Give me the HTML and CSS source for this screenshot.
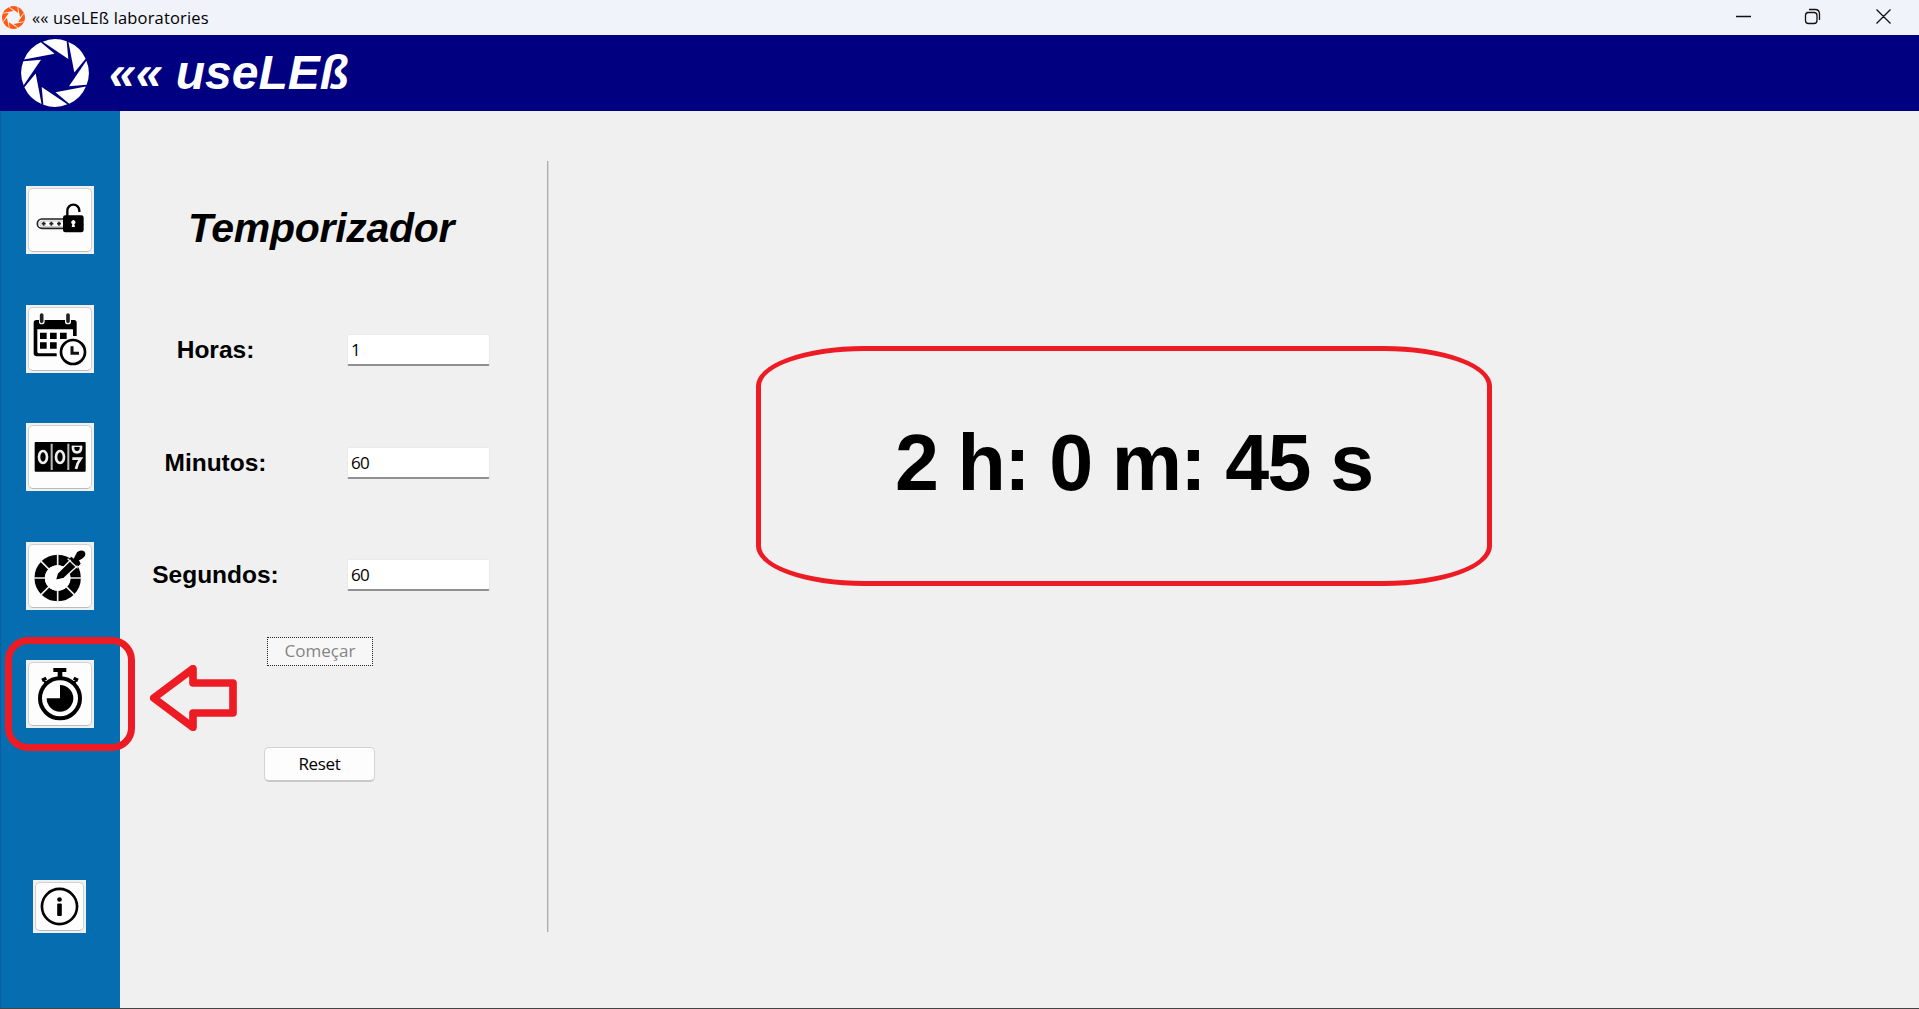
FILE: index.html
```html
<!DOCTYPE html>
<html lang="pt">
<head>
<meta charset="utf-8">
<title>«« useLEß laboratories</title>
<link rel="stylesheet" href="styles.css">
</head>
<body>
<svg class="defs" aria-hidden="true">
  <defs>
    <path id="blade" d="M-37-94Q-2-109 35-95L40-42Z"/>
    <g id="aperture">
      <use href="#blade"/><use href="#blade" transform="rotate(45)"/><use href="#blade" transform="rotate(90)"/><use href="#blade" transform="rotate(135)"/>
      <use href="#blade" transform="rotate(180)"/><use href="#blade" transform="rotate(225)"/><use href="#blade" transform="rotate(270)"/><use href="#blade" transform="rotate(315)"/>
    </g>
  </defs>
</svg>
<div class="window">
  <div class="titlebar">
    <svg class="app-icon" viewBox="-102 -102 204 204"><use href="#aperture"/></svg>
    <span class="app-title">«« useLEß laboratories</span>
    <svg class="controls" viewBox="0 0 219 35">
      <path d="M36 16.5H51M106.500 12.500h7.500q3 0 3 3v5q0 3-3 3h-5.500q-3 0-3-3v-5q0-3 3-3M109 9.500h6q4.500 0 4.500 4.500v6M176.500 9.500l14 14M190.500 9.500l-14 14"/>
    </svg>
  </div>
  <header class="header">
    <svg class="logo" viewBox="-102 -102 204 204"><use href="#aperture"/></svg>
    <h1 class="brand">«« useLEß</h1>
  </header>
  <div class="body">
    <nav class="sidebar">
      <button class="tool"><svg viewBox="76 48 204 204">
        <path d="M190 147H124a14 14 0 0 0 0 28H190" fill="none" stroke="#222" stroke-width="5"/>
        <path d="M190 153H126a8 8 0 0 0 0 17H190" fill="none" stroke="#aaa" stroke-width="2"/>
        <path d="M123 161h12M129 155v12M146 161h12M152 155v12M169 161h12M175 155v12" stroke="#222" stroke-width="5"/>
        <path d="M200 138v-16a18 18 0 0 1 36 0v4" fill="none" stroke="#000" stroke-width="7"/>
        <rect x="187" y="136" width="62" height="51" rx="7"/>
        <path d="M213 171l2-9a6 6 0 1 1 6 0l2 9z" fill="#fff"/>
      </svg></button>
      <button class="tool"><svg viewBox="76 404 204 204">
        <path d="M99 477V457q0-8 8-8h8v5q0 8 8 8t9-8v-5h61v5q0 8 9 8t9-8v-5h9q8 0 8 8v40h-11v-20H110v67q0 5 5 5h53v9H109q-10 0-10-10z"/>
        <path d="M123 434v19M202 434v19" stroke="#222" stroke-width="11" stroke-linecap="round"/>
        <path d="M118 487h20v19h-20zM148 487h20v19h-20zM178 487h20v19h-20zM118 516h20v19h-20zM148 516h20v19h-20z"/>
        <circle cx="217" cy="545" r="36" fill="#fdfdfd" stroke="#000" stroke-width="8"/>
        <path d="M214 528v21h21" fill="none" stroke="#111" stroke-width="9"/>
      </svg></button>
      <button class="tool"><svg viewBox="76 70 204 204">
        <rect x="102" y="127" width="153" height="89" rx="3"/>
        <path d="M153 132v79M203 132v79" stroke="#bbb" stroke-width="6"/>
        <g fill="none" stroke="#eee" stroke-width="8"><ellipse cx="127" cy="172" rx="12" ry="18"/><ellipse cx="178" cy="172" rx="12" ry="18"/>
        <path d="M217 138v7q0 13 12 13t12-13v-7M215 177h25q-11 14-14 31"/></g>
        <path d="M215 140h28" stroke="#eee" stroke-width="4"/>
      </svg></button>
      <button class="tool"><svg viewBox="76 426 204 204">
        <circle cx="171" cy="534" r="54" fill="none" stroke="#000" stroke-width="31"/>
        <path d="M171 460v148M98 534h147M119 482l104 104M119 586l104-104" stroke="#eee" stroke-width="5"/>
        <circle cx="171" cy="534" r="38" fill="#fdfdfd"/>
        <path d="M164 541l6-21 43-43 20 18-43 40z" stroke="#fdfdfd" stroke-width="4"/>
        <path d="M206 476l6-6 7 6 10-19q8-8 18-5 10 4 6 15-3 6-18 14l5 10-7 8z"/>
        <path d="M201 476l30 29" stroke="#eee" stroke-width="4"/>
      </svg></button>
      <button class="tool"><svg viewBox="76 117 204 204">
        <circle cx="178" cy="232" r="60" fill="none" stroke="#000" stroke-width="12"/>
        <path d="M158 141h39v12h-12v16h-14v-16h-13zM178 192a40 40 0 1 1-40 40h40z"/>
        <path d="M124 178l13-6M128 174l12 14M232 178l-13-6M228 174l-12 14" stroke="#000" stroke-width="10"/>
      </svg></button>
      <button class="tool info"><svg viewBox="98 58 160 160">
        <circle cx="178" cy="138" r="53" fill="none" stroke="#000" stroke-width="8"/>
        <circle cx="178" cy="117" r="7"/><rect x="171" y="129" width="14" height="38" rx="3"/>
      </svg></button>
    </nav>
    <main class="content">
      <section class="form">
        <h2 class="heading">Temporizador</h2>
        <div class="row"><label for="h">Horas:</label><input id="h" value="1"></div>
        <div class="row"><label for="m">Minutos:</label><input id="m" value="60"></div>
        <div class="row"><label for="s">Segundos:</label><input id="s" value="60"></div>
        <div class="start">Começar</div>
        <div class="reset">Reset</div>
      </section>
      <div class="divider"></div>
      <section class="display"><div class="clock"><span class="time">2 h: 0 m: 45 s</span></div></section>
    </main>
  </div>
  <div class="highlight"></div>
  <svg class="arrow" viewBox="450 135 261 198"><path d="M461 234L579 146V189H699V279H579V322Z"/></svg>
</div>
</body>
</html>
```
FILE: styles.css
```css
* { box-sizing: border-box; }
body { margin: 0; font-family: "Liberation Sans", Arial, sans-serif; color: #000; }
.defs { position: absolute; width: 0; height: 0; }
.window { position: relative; width: 1919px; height: 1009px; display: flex; flex-direction: column; background: #f0f0f0; border-bottom: 1px solid #444; overflow: hidden; }

.titlebar { height: 35px; flex: none; display: flex; align-items: center; background: #f0f3fa; padding-left: 2px; }
.app-icon { width: 23px; height: 23px; fill: #ff5a14; margin: 0 7px 1px 0; }
.app-title { font: 16.500px/22px "Open Sans", sans-serif; letter-spacing: .150px; white-space: nowrap; }
.controls { width: 219px; height: 35px; margin-left: auto; fill: none; stroke: #111; stroke-width: 1.300; }

.header { height: 76px; flex: none; display: flex; align-items: center; background: #000080; color: #fff; padding-left: 21px; }
.logo { width: 68px; height: 68px; fill: #fff; }
.brand { margin: 0 0 0 20px; font-size: 48px; font-style: italic; line-height: 60px; white-space: nowrap; }

.body { flex: 1; display: flex; min-height: 0; }
.sidebar { width: 120px; flex: none; background: #076db1; border-left: 1px solid #075f9b; display: flex; flex-direction: column; padding: 75px 0 0 24.500px; gap: 50.500px; }
.tool { position: relative; width: 68px; height: 68px; flex: none; padding: 0; border: 0; background: #f0f0f0; }
.tool::before { content: ""; position: absolute; inset: 2px; border: 1px solid #d0d0d0; border-bottom-color: #bbb; border-radius: 5px; background: #fdfdfd; }
.tool svg { position: relative; display: block; width: 100%; height: 100%; }
.info { width: 53px; height: 53px; margin: 101px 0 0 7.500px; }

.content { flex: 1; display: flex; }
.form { width: 427px; display: flex; flex-direction: column; }
.heading { margin: 89px 0 0 68px; font-size: 41px; font-style: italic; letter-spacing: -.280px; line-height: 56px; white-space: nowrap; }
.row { display: grid; grid-template-columns: 190px 143px; column-gap: 37px; align-items: center; height: 32px; margin-top: 80.700px; }
.heading + .row { margin-top: 78px; }
.row label { text-align: center; padding-left: 1px; font-size: 24.500px; font-weight: bold; }
.row input { width: 143px; height: 32px; border: 1px solid #eaeaea; border-bottom: 2px solid #909090; border-radius: 2px; background: #fff; padding: 0 3px; font: 17px "Open Sans", sans-serif; letter-spacing: -.700px; }
.start, .reset { font: 17px/26px "Open Sans", sans-serif; text-align: center; }
.start { width: 106px; height: 29px; margin: 46px 0 0 147px; border: 1px dotted #222; background: #f7f7f7; color: #858585; }
.reset { width: 111px; height: 35px; margin: 81px 0 0 144px; border: 1px solid #d3d3d3; border-bottom: 2px solid #c8c8c8; border-radius: 5px; background: #fdfdfd; line-height: 31px; letter-spacing: -.300px; }
.divider { width: 2px; height: 771px; margin-top: 50px; background: #adadad; border-right: 1px solid #d8d8d8; }
.display { flex: 1; padding: 235px 0 0 207px; }
.clock { width: 736px; height: 240px; border: 5px solid #ed1c24; border-radius: 108px / 40px; display: flex; align-items: center; padding: 0 0 6px 134px; }
.time { font-size: 79px; font-weight: bold; line-height: 90px; letter-spacing: -1.650px; white-space: nowrap; }

.highlight { position: absolute; left: 5px; top: 637px; width: 130px; height: 114px; border: 7px solid #ed1c24; border-radius: 23px; }
.arrow { position: absolute; left: 150px; top: 665px; width: 87px; height: 66px; fill: none; stroke: #ed1c24; stroke-width: 23; stroke-linejoin: round; }
```
